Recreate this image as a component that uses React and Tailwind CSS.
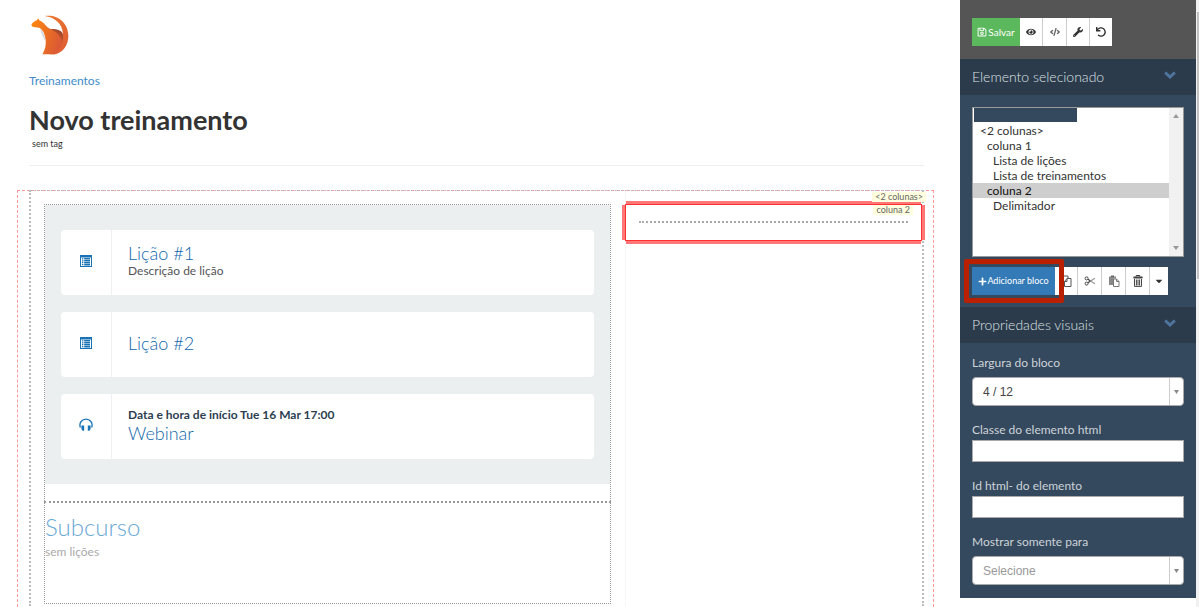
import React, { useState } from "react";
import { FaEye, FaCode, FaWrench, FaPlus, FaCaretDown, FaUndo, FaRegSave } from "react-icons/fa";

const treeItems = [
  { value: "root", label: "", indent: "pl-1" },
  { value: "cols", label: "<2 colunas>", indent: "pl-[7px]" },
  { value: "col1", label: "coluna 1", indent: "pl-[14px]" },
  { value: "lessons", label: "Lista de lições", indent: "pl-5" },
  { value: "trainings", label: "Lista de treinamentos", indent: "pl-5" },
  { value: "col2", label: "coluna 2", indent: "pl-[14px]" },
  { value: "divider", label: "Delimitador", indent: "pl-5" },
];

const Logo = () => (
  <svg viewBox="93 44 116 122" className="h-10 w-[38px]" role="img" aria-label="Logo">
    <defs>
      <linearGradient id="body" x1="0" y1="0" x2="1" y2="0.4">
        <stop offset="0" stopColor="#ff8a0c" />
        <stop offset="1" stopColor="#dc5a35" />
      </linearGradient>
      <linearGradient id="tail" x1="0" y1="0" x2="1" y2="1">
        <stop offset="0" stopColor="#f07a2c" />
        <stop offset="1" stopColor="#dc5a35" />
      </linearGradient>
      <linearGradient id="shade" x1="0.9" y1="0" x2="0.3" y2="0.9">
        <stop offset="0" stopColor="#8f3f2a" />
        <stop offset="1" stopColor="#e2652c" />
      </linearGradient>
    </defs>
    <path d="M134 47C172 40 207 66 207 107C207 136 191 158 166 164L150 164C178 150 193 128 190 98C188 70 166 51 134 47Z" fill="url(#tail)" />
    <path d="M121 84C127 90 134 105 138 124C130 114 123 100 121 84Z" fill="#d5d9dc" />
    <path d="M94 74C98 66 106 61 111 60L115 54L119 61C133 65 139 82 153 87C172 89 188 94 190 108C192 136 182 155 166 164H128C136 150 139 137 138 122C136 106 131 91 120 84C112 80 98 86 94 74Z" fill="url(#body)" />
    <path d="M151 87C172 86 187 91 190 102C192 112 191 122 188 130C184 108 172 96 151 87Z" fill="url(#shade)" />
  </svg>
);

const ListIcon = () => (
  <svg viewBox="0 0 12 12" className="h-3 w-3" fill="#1a73b5" aria-hidden="true">
    <path fillRule="evenodd" d="M0 0h12v12H0zM1 2.4v8.6h10V2.4z" />
    <path d="M2 3.3h1.4v1.2H2zM2 5.2h1.4v1.2H2zM2 7.1h1.4v1.2H2zM2 9h1.4v1.2H2zM4.2 3.1H10v1.5H4.2zM4.2 5.1H10v1.5H4.2zM4.2 7H10v1.5H4.2zM4.2 8.9H10v1.5H4.2z" />
  </svg>
);

const HeadphonesIcon = () => (
  <svg viewBox="0 0 14 14" className="h-[14px] w-[14px]" aria-hidden="true">
    <path d="M1.4 9.5C-.4 4.5 3.2 1.2 7 1.2S14.4 4.5 12.6 9.5" fill="none" stroke="#1a73b5" strokeWidth="1.3" />
    <path d="M2.4 7.5h2.8v5.300H3.600L2.400 11zM8.800 7.500h2.800V11l-1.200 1.800H8.800z" fill="#1a73b5" />
  </svg>
);

const ChevronIcon = () => (
  <svg viewBox="0 0 12 8" className="mb-1 h-2 w-3" aria-hidden="true">
    <path d="M1.200 1.500L6 6l4.800-4.500" fill="none" stroke="#4f759f" strokeWidth="3" />
  </svg>
);

const CopyIcon = () => (
  <svg viewBox="0 0 12 12" className="h-3 w-3" fill="none" stroke="#555" aria-hidden="true">
    <path d="M4 8.500H1V4L3.500 1H8v2M3.500 1v3H1" />
    <path d="M4.500 11.500V6.500L7 3.500h4v8zM7 3.500v3H4.500" />
  </svg>
);

const ScissorsIcon = () => (
  <svg viewBox="0 0 12 12" className="h-3 w-3" fill="none" aria-hidden="true">
    <circle cx="2.600" cy="3.400" r="1.500" stroke="#444" />
    <circle cx="2.600" cy="8.600" r="1.500" stroke="#444" />
    <path d="M4 4.200L6.500 6 4 7.800" stroke="#444" strokeWidth="1.300" />
    <path d="M6.500 6L11 3.200M6.500 6L11 8.800" stroke="#999" strokeWidth="1.200" />
  </svg>
);

const PasteIcon = () => (
  <svg viewBox="0 0 12 12" className="h-3 w-3" aria-hidden="true">
    <path d="M1 1.500h7v2H5.500V10H1z" fill="#888" />
    <path d="M3 .500h3v1.500H3z" fill="#666" />
    <path d="M5.500 4h3L11 6.500v5H5.500zM8.500 4v2.500H11" fill="#fff" stroke="#777" />
  </svg>
);

const TrashIcon = () => (
  <svg viewBox="0 0 12 12" className="h-3 w-3" aria-hidden="true">
    <path d="M4.300 1.500V.5h3.400v1M1.500 2h9" fill="none" stroke="#333" />
    <path d="M1.500 2h9v1.500h-9z" fill="#444" />
    <path d="M2.500 4v7.400h7V4M4.400 4.500v6M6 4.500v6M7.600 4.500v6" fill="none" stroke="#444" />
  </svg>
);

const ToolButton = ({ label, width, children }) => (
  <button type="button" aria-label={label} className={`flex h-7 items-center justify-center border-r border-[#ccc] bg-white text-[10px] text-[#333] last:border-r-0 ${width}`}>
    {children}
  </button>
);

const LessonCard = ({ icon, title, note, description }) => (
  <a href="#" className="flex h-[65px] rounded bg-white">
    <span className="flex w-[51px] shrink-0 items-center justify-center border-r border-[#eef0f1] pb-1">{icon}</span>
    <span className="flex flex-col justify-center pl-4 pb-1">
      {note && <span className="text-xs leading-4 font-bold text-[#2c3e50]">{note}</span>}
      <span className="text-lg leading-5 font-light text-[#0f66ab]">{title}</span>
      {description && <span className="text-xs leading-4 text-[#555]">{description}</span>}
    </span>
  </a>
);

const SectionHeader = ({ title }) => (
  <button type="button" className="flex h-9 w-full items-center justify-between bg-[#2c3b4b] pr-5 pl-3 text-sm font-light text-[#dde2e6]">
    <span>{title}</span>
    <ChevronIcon />
  </button>
);

const TextField = ({ id, label }) => (
  <div>
    <label htmlFor={id} className="block text-xs leading-5 text-[#cdd3d8]">{label}</label>
    <input id={id} type="text" className="block h-[22px] w-full border border-[#aaa] bg-white px-2 text-xs text-[#444]" />
  </div>
);

const SelectField = ({ id, label, options, color }) => (
  <div>
    <label htmlFor={id} className="mb-1 block text-xs leading-5 text-[#cdd3d8]">{label}</label>
    <div className="relative">
      <select id={id} className={`block h-[29px] w-full appearance-none rounded border border-[#aaa] bg-white pl-[10px] font-['Liberation_Sans',sans-serif] text-xs ${color}`}>
        {options.map((option) => (
          <option key={option}>{option}</option>
        ))}
      </select>
      <span className="pointer-events-none absolute inset-y-px right-px flex w-[14px] items-center justify-center border-l border-[#ccc] text-[#888]">
        <svg viewBox="0 0 5 4" className="h-1 w-[5px]" fill="currentColor" aria-hidden="true"><path d="M0 0h5L2.500 4z" /></svg>
      </span>
    </div>
  </div>
);

const Editor = () => (
  <main className="flex min-w-0 flex-1 flex-col pt-[15px] pr-[26px] pl-[17px]">
    <header className="mr-[10px] ml-3 border-b border-[#eee] pb-[13px]">
      <a href="#" className="ml-[2px] block w-[38px]"><Logo /></a>
      <a href="#" className="mt-4 block text-xs leading-5 text-[#428bca]">Treinamentos</a>
      <h1 className="mt-[13px] text-[27px] leading-8 font-bold text-[#333]">Novo treinamento</h1>
      <p className="ml-[3px] text-[9px] leading-4 text-[#333]">sem tag</p>
    </header>

    <div className="mt-6 flex-1 border border-b-0 border-dashed border-[#f99]">
      <section className="relative mr-[9px] ml-[11px] -mt-px flex h-full border-x-2 border-t border-dotted border-[#bbb]">
        <span className="absolute -right-1 top-px z-20 bg-[#ffffdf] px-[3px] text-[9px] leading-[10px] text-[#666]">&lt;2 colunas&gt;</span>

        <div className="w-2/3 pt-[13px] pr-[14px] pl-[13px]">
          <div className="border border-b-0 border-dotted border-[#999] pb-[17px]">
            <div className="flex flex-col gap-[17px] bg-[#ebefef] px-4 py-[25px]">
              <LessonCard icon={<ListIcon />} title="Lição #1" description="Descrição de lição" />
              <LessonCard icon={<ListIcon />} title="Lição #2" />
              <LessonCard icon={<HeadphonesIcon />} note="Data e hora de início Tue 16 Mar 17:00" title="Webinar" />
            </div>
          </div>
          <div className="h-[103px] border border-t-2 border-dotted border-[#999] pt-[10px]">
            <h2 className="text-2xl leading-7 font-light text-[#6aa9d6]">Subcurso</h2>
            <p className="mt-[3px] text-xs leading-4 text-[#aaa]">sem lições</p>
          </div>
        </div>

        <div className="w-1/3 border-l border-dotted border-[#eee] pt-[13px]">
          <div className="relative -ml-px h-[37px] border border-[#ff3030] px-[13px] pt-4">
            <i className="absolute inset-x-0 -top-1 h-[3px] bg-[#ff7777]" />
            <i className="absolute inset-x-0 -bottom-1 h-[3px] bg-[#ff7777]" />
            <i className="absolute inset-y-0 -left-1 w-[3px] bg-[#ff7777]" />
            <i className="absolute inset-y-0 -right-1 w-[3px] bg-[#ff7777]" />
            <span className="absolute right-2 top-0 bg-[#ffffdf] px-[3px] text-[9px] leading-[10px] text-[#666]">coluna 2</span>
            <hr className="border-t-2 border-dotted border-[#aaa]" />
          </div>
        </div>
      </section>
    </div>
  </main>
);

const Sidebar = () => {
  const [selected, setSelected] = useState("col2");

  return (
    <aside className="w-[236px] shrink-0 self-start bg-[#34495e] pb-[13px]">
      <div className="flex bg-[#555] px-3 pt-[18px] pb-[13px]">
        <button type="button" className="flex h-7 w-12 items-center justify-center gap-px bg-[#5cb85c] text-[10px] text-white">
          <FaRegSave />Salvar
        </button>
        <ToolButton label="Visualizar" width="w-[23px]"><FaEye /></ToolButton>
        <ToolButton label="Código" width="w-6"><FaCode className="text-[#666]" /></ToolButton>
        <ToolButton label="Configurar" width="w-[23px]"><FaWrench /></ToolButton>
        <ToolButton label="Desfazer" width="w-[22px]"><FaUndo /></ToolButton>
      </div>

      <SectionHeader title="Elemento selecionado" />
      <div className="px-3 py-3">
        <div className="relative flex h-[150px] border border-[#999] bg-white">
          <select
            size={10}
            aria-label="Elemento selecionado"
            value={selected}
            onChange={(e) => setSelected(e.target.value)}
            className="h-full flex-1 overflow-hidden bg-white p-0 text-xs font-light text-[#333] outline-none"
          >
            {treeItems.map((item) => (
              <option key={item.value} value={item.value} className={`h-[15px] min-h-0 py-0 pr-0 leading-[14px] ${item.indent}`}>{item.label}</option>
            ))}
          </select>
          <div className="absolute top-0 left-px h-[14px] w-[103px] bg-[#34495e]" />
          <div className="flex w-[14px] flex-col items-center justify-between bg-[#f1f1f1] py-[6px] text-[#999]" aria-hidden="true">
            <svg viewBox="0 0 6 4" className="h-1 w-[6px]" fill="currentColor"><path d="M0 4h6L3 0z" /></svg>
            <svg viewBox="0 0 6 4" className="h-1 w-[6px]" fill="currentColor"><path d="M0 0h6L3 4z" /></svg>
          </div>
        </div>

        <div className="mt-[10px] flex">
          <div className="relative">
            <button type="button" className="flex h-7 w-[83px] items-center justify-center bg-[#337ab7] text-[9px] text-white">
              <FaPlus />Adicionar bloco
            </button>
            <div className="pointer-events-none absolute -inset-2 -right-[9px] z-10 rounded-xs border-[5px] border-[#b82000]" />
          </div>
          <ToolButton label="Copiar" width="w-[23px]"><CopyIcon /></ToolButton>
          <ToolButton label="Recortar" width="w-6"><ScissorsIcon /></ToolButton>
          <ToolButton label="Colar" width="w-6"><PasteIcon /></ToolButton>
          <ToolButton label="Excluir" width="w-6"><TrashIcon /></ToolButton>
          <ToolButton label="Mais" width="w-[18px]"><FaCaretDown /></ToolButton>
        </div>
      </div>

      <SectionHeader title="Propriedades visuais" />
      <div className="flex flex-col gap-[14px] px-3 pt-[10px]">
        <SelectField id="width" label="Largura do bloco" options={["4 / 12"]} color="text-[#444]" />
        <TextField id="css-class" label="Classe do elemento html" />
        <TextField id="html-id" label="Id html- do elemento" />
        <SelectField id="show-for" label="Mostrar somente para" options={["Selecione"]} color="text-[#999]" />
      </div>
    </aside>
  );
};

const App = () => (
  <div className="flex min-h-screen bg-white font-[Lato,'Liberation_Sans',sans-serif]">
    <Editor />
    <Sidebar />
    <div className="w-[3px] shrink-0 bg-[#f1f1f1] pt-3 pl-px" aria-hidden="true">
      <div className="h-[267px] bg-[#c1c1c1]" />
    </div>
  </div>
);

export default App;
